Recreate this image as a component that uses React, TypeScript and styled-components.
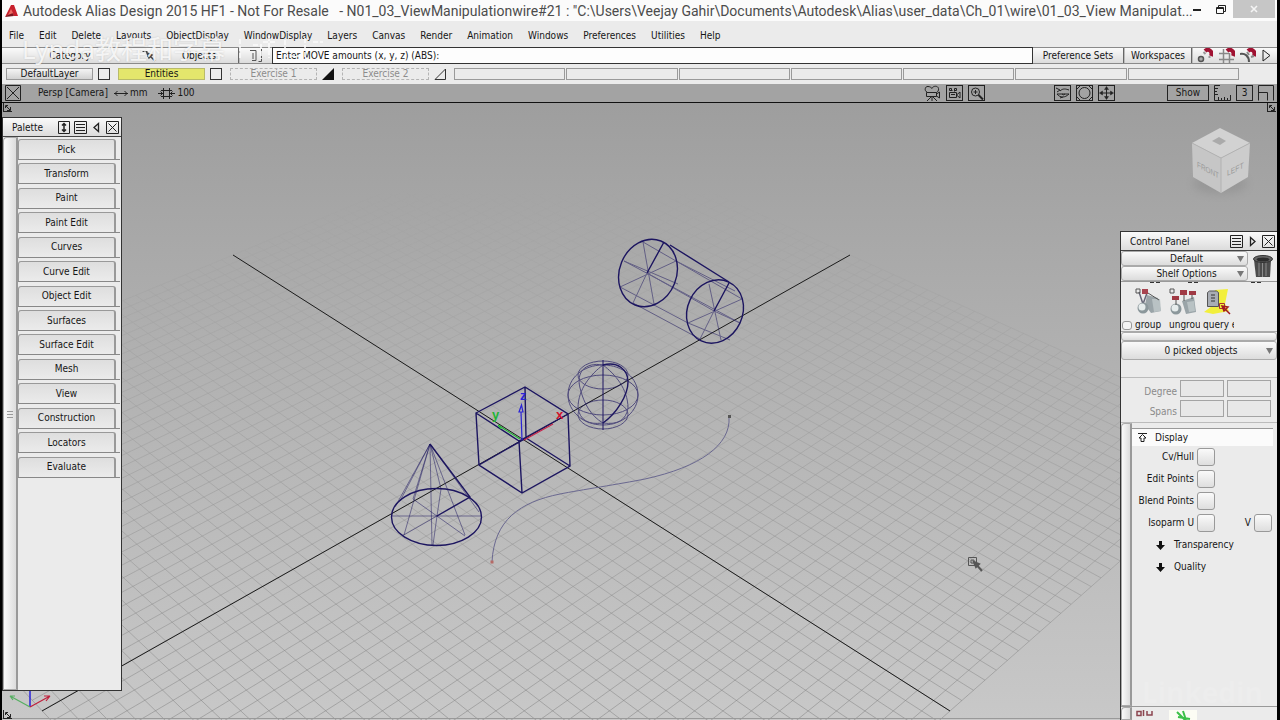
import React from 'react';
import styled, { createGlobalStyle, css } from 'styled-components';

const GlobalStyle = createGlobalStyle`
  *, *::before, *::after { box-sizing: border-box; }
  html, body, #root { height: 100%; }
  body {
    margin: 0;
    background: #000;
    color: #161616;
    font: 10px/14px "DejaVu Sans Condensed", "DejaVu Sans", "Noto Sans", sans-serif;
    overflow: hidden;
  }
  button, input, a {
    font: inherit;
    color: inherit;
    margin: 0;
    padding: 0;
    border-radius: 0;
    text-decoration: none;
  }
  ul { margin: 0; padding: 0; list-style: none; }
  svg { display: block; }
`;

const Shell = styled.div`
  height: 100vh;
  display: flex;
  flex-direction: column;
  margin: 0 3px 0 2px;
  background: #ebebeb;
  position: relative;
`;

const TitleBar = styled.header`
  display: flex;
  align-items: center;
  height: 21px;
  flex: none;
  padding-left: 2px;
  background: #fbfbfb;
`;

const Title = styled.h1`
  flex: 1;
  min-width: 0;
  margin: 0 0 0 4px;
  font: 400 14px/20px Roboto, "Open Sans", sans-serif;
  color: #4c4c4c;
  white-space: pre;
`;

const WindowButton = styled.button<{ $close?: boolean }>`
  display: grid;
  place-items: center;
  width: ${p => (p.$close ? 42 : 24)}px;
  height: ${p => (p.$close ? 18 : 20)}px;
  align-self: flex-start;
  border: 0;
  background: ${p => (p.$close ? '#c6c6c6' : 'transparent')};
`;

const WindowControls = styled.div`
  display: flex;
  align-self: flex-start;
  padding-right: 2px;
`;

const MenuBar = styled.nav`
  display: flex;
  align-items: center;
  gap: 15px;
  height: 26px;
  flex: none;
  padding: 3px 7px 0;
`;

const barGradient = css`
  background: linear-gradient(#fafafa, #dcdcdc);
`;

const CommandRow = styled.div`
  display: flex;
  height: 17px;
  flex: none;
  border-top: 1px solid #8a8a8a;
  border-bottom: 1px solid #8a8a8a;
  ${barGradient}
`;

const CommandButton = styled.button<{ $w: number; $divide?: boolean }>`
  width: ${p => p.$w}px;
  border: 0;
  border-right: ${p => (p.$divide ? '2px groove #bbb' : '0')};
  background: transparent;
  display: flex;
  align-items: center;
  justify-content: center;
`;

const Prompt = styled.input`
  flex: 1;
  min-width: 0;
  margin: -1px 0;
  padding: 0 3px;
  height: 17px;
  border: 1px solid #333;
  background: #fdfdfd;
`;

const SnapTools = styled.div`
  display: flex;
  align-items: center;
  justify-content: space-between;
  width: 84px;
  padding: 0 6px 0 4px;
`;

const ToolButton = styled.button`
  border: 0;
  background: transparent;
  display: grid;
  place-items: center;
`;

const LayerRow = styled.div`
  display: flex;
  align-items: center;
  height: 20px;
  flex: none;
  padding: 0 38px 0 4px;
`;

const LayerButton = styled.button<{ $kind: 'default' | 'active' | 'ghost' }>`
  width: 87px;
  height: 12px;
  line-height: 10px;
  border: 1px solid #999;
  flex: none;
  ${p => p.$kind === 'default' && css`background: linear-gradient(#f4f4f4, #d2d2d2);`}
  ${p => p.$kind === 'active' && css`background: #e4e66c; border-color: #b9bb6a;`}
  ${p => p.$kind === 'ghost' && css`background: transparent; border: 1px dashed #b4b4b4; color: #8c8c8c;`}
`;

const LayerBox = styled.input`
  appearance: none;
  width: 12px;
  height: 12px;
  border: 1px solid #333;
  background: #ededed;
  flex: none;
`;

const LayerGroup = styled.div`
  display: flex;
  align-items: center;
  justify-content: space-between;
  width: 104px;
  margin-right: 8px;
  flex: none;
`;

const EmptySlots = styled.div`
  flex: 1;
  display: flex;
  gap: 1px;
`;

const EmptySlot = styled.div`
  flex: 1;
  height: 12px;
  border: 1px solid #9a9a9a;
`;

const ViewBar = styled.div`
  display: flex;
  align-items: center;
  height: 19px;
  flex: none;
  padding: 0 3px;
  background: #a3a3a3;
  border-bottom: 1px solid #111;
`;

const ViewLabels = styled.div`
  display: flex;
  align-items: center;
  margin-left: 17px;
`;

const ViewLabel = styled.span<{ $before?: number }>`
  display: flex;
  align-items: center;
  gap: 2px;
  margin-left: ${p => p.$before ?? 0}px;
`;

const IconCluster = styled.div<{ $gapAfter: number }>`
  display: flex;
  align-items: center;
  gap: 5px;
  margin-right: ${p => p.$gapAfter}px;
`;

const FramedButton = styled.button<{ $w?: number; $bare?: boolean }>`
  width: ${p => p.$w ?? 17}px;
  height: 16px;
  display: grid;
  place-items: center;
  line-height: 14px;
  background: transparent;
  border: ${p => (p.$bare ? '0' : '1px solid #222')};
`;

const Spacer = styled.div`
  flex: 1;
`;

const Viewport = styled.main`
  position: relative;
  flex: 1;
  min-height: 0;
  display: flex;
  justify-content: space-between;
  align-items: flex-start;
  overflow: hidden;
  background: linear-gradient(#9e9e9e, #aeaeae 35%, #c8c8c8);
`;

const Scene = styled.svg`
  position: absolute;
  inset: 0;
  width: 100%;
  height: 100%;
`;

const CornerMark = styled.span<{ $at: 'tl' | 'tr' | 'bl' }>`
  position: absolute;
  ${p => (p.$at === 'bl' ? 'bottom: 1px;' : 'top: 0;')}
  ${p => (p.$at === 'tr' ? 'right: 1px;' : 'left: 1px;')}
`;

const Palette = styled.aside`
  position: relative;
  display: flex;
  flex-direction: column;
  width: 120px;
  height: calc(100% - 43px);
  margin-top: 14px;
  border: 1px solid #333;
  background: #ebebeb;
`;

const PanelHeader = styled.div`
  display: flex;
  align-items: center;
  gap: 4px;
  height: 19px;
  flex: none;
  padding: 0 2px 0 9px;
  border-bottom: 1px solid #444;
  ${barGradient}
`;

const PanelTitle = styled.h2`
  flex: 1;
  margin: 0;
  padding-top: 2px;
  font-size: 10px;
  line-height: 14px;
  font-weight: 400;
`;

const PanelBody = styled.div`
  flex: 1;
  min-height: 0;
  display: flex;
`;

const Gutter = styled.div<{ $w: number }>`
  width: ${p => p.$w}px;
  flex: none;
  align-self: stretch;
  display: grid;
  place-items: center;
  border: 1px solid #aaa;
  border-right: 2px solid #999;
  border-radius: 4px 0 0 0;
  background: linear-gradient(90deg, #fafafa, #dcdcdc);
`;

const PaletteTabs = styled.div`
  flex: 1;
  display: grid;
  grid-template-rows: repeat(14, 1fr);
  height: 342px;
  padding-right: 1px;
  margin-top: 2px;
`;

const TabCell = styled.div`
  height: 21px;
  padding-right: 4px;
  border-bottom: 1px solid #888;
`;

const TabButton = styled.button`
  width: 100%;
  height: 20px;
  border: 1px solid #999;
  border-bottom: 0;
  border-right: 2px solid #999;
  border-radius: 3px 3px 0 0;
  background: linear-gradient(#dedede, #ebebeb);
  line-height: 16px;
`;

const ControlPanel = styled.aside`
  position: relative;
  display: flex;
  flex-direction: column;
  width: 157px;
  height: calc(100% - 128px);
  margin-top: 128px;
  border-left: 1px solid #333;
  border-top: 1px solid #333;
  background: #ebebeb;
`;

const ShelfTop = styled.div`
  display: flex;
  flex: none;
  border-bottom: 1px solid #999;
`;

const ShelfMenus = styled.div`
  flex: 1;
`;

const DropButton = styled.button<{ $tall?: boolean }>`
  display: flex;
  align-items: center;
  justify-content: flex-end;
  width: 100%;
  height: ${p => (p.$tall ? 19 : 15)}px;
  flex: none;
  padding-right: 3px;
  border: 1px solid #aaa;
  border-radius: 3px;
  ${barGradient}
  & > span { flex: 1; text-align: center; padding-left: 14px; }
`;

const TrashButton = styled.button`
  width: 29px;
  border: 0;
  background: transparent;
  display: grid;
  place-items: center;
`;

const Shelf = styled.ul`
  position: relative;
  display: flex;
  height: 50px;
  flex: none;
  padding: 5px 0 0 14px;
  border-bottom: 1px solid #aaa;
`;

const ShelfItem = styled.li`
  width: 34px;
  height: 44px;
  overflow: hidden;
  white-space: nowrap;
`;

const ShelfButton = styled.button`
  display: block;
  width: 31px;
  border: 0;
  background: transparent;
  text-align: left;
  overflow: hidden;
  white-space: nowrap;
  & > span { display: block; line-height: 15px; }
`;

const ClippedRow = styled.svg`
  position: absolute;
  left: 0;
  top: 0;
`;

const ShelfTick = styled.input`
  appearance: none;
  position: absolute;
  left: 1px;
  bottom: 1px;
  width: 10px;
  height: 9px;
  border: 1px solid #999;
  border-radius: 3px;
  background: #f4f4f4;
`;

const Divider = styled.div`
  height: 9px;
  flex: none;
  border: 1px solid #aaa;
  border-radius: 3px;
  ${barGradient}
`;

const InfoStrip = styled.div`
  height: 18px;
  flex: none;
  border-bottom: 1px solid #bbb;
`;

const Fields = styled.div`
  display: grid;
  grid-template-columns: 55px 44px 44px;
  gap: 3px;
  flex: none;
  padding: 2px 0 5px 1px;
  border-bottom: 1px solid #bbb;
  color: #8a8a8a;
`;

const FieldLabel = styled.label`
  text-align: right;
  line-height: 24px;
  height: 17px;
`;

const Field = styled.input`
  width: 100%;
  height: 17px;
  border: 1px solid #a4a4a4;
  background: #e8e8e8;
`;

const Section = styled.section`
  flex: 1;
  margin: 5px 4px 0 0;
  border-top: 1px solid #999;
`;

const SectionHead = styled.button<{ $inner?: boolean }>`
  display: flex;
  align-items: center;
  gap: ${p => (p.$inner ? 9 : 8)}px;
  width: 100%;
  height: ${p => (p.$inner ? 22 : 17)}px;
  padding-left: ${p => (p.$inner ? 24 : 6)}px;
  border: 0;
  background: ${p => (p.$inner ? 'transparent' : '#fbfbfb')};
`;

const ToggleGrid = styled.div`
  display: grid;
  grid-template-columns: 62px 17px 1fr 17px;
  grid-auto-rows: 22px;
  align-items: center;
  column-gap: 3px;
  padding-right: 2px;
`;

const ToggleLabel = styled.label`
  text-align: right;
  white-space: nowrap;
`;

const Toggle = styled.input<{ $last?: boolean }>`
  appearance: none;
  width: 18px;
  height: 18px;
  border: 1px solid #999;
  border-radius: 3px;
  background: linear-gradient(#fafafa, #dedede);
  ${p => p.$last && css`grid-column: 4;`}
`;

const BottomShelf = styled.div`
  display: flex;
  align-items: flex-end;
  height: 14px;
  flex: none;
  border-top: 1px solid #999;
`;

const Watermark = styled.div`
  position: absolute;
  left: 20px;
  top: 33px;
  display: flex;
  align-items: center;
  gap: 14px;
  font: 400 26px/32px "Open Sans", "Noto Sans CJK SC", sans-serif;
  color: rgba(250, 250, 250, 0.9);
  text-shadow: 0 0 2px rgba(0, 0, 0, 0.16);
  white-space: nowrap;
  pointer-events: none;
`;

const Brand = styled.div`
  position: absolute;
  right: 14px;
  bottom: 12px;
  font: 700 28px/32px "Open Sans", sans-serif;
  color: rgba(255, 255, 255, 0.12);
  pointer-events: none;
`;

const MENUS = ['File', 'Edit', 'Delete', 'Layouts', 'ObjectDisplay', 'WindowDisplay', 'Layers', 'Canvas',
  'Render', 'Animation', 'Windows', 'Preferences', 'Utilities', 'Help'];

const TABS = ['Pick', 'Transform', 'Paint', 'Paint Edit', 'Curves', 'Curve Edit', 'Object Edit', 'Surfaces',
  'Surface Edit', 'Mesh', 'View', 'Construction', 'Locators', 'Evaluate'];

/* Perspective projection of the ground plane, u and v in -1..1 */
const project = (u: number, v: number) => {
  const w = 1 + 0.1906 * u + 0.1911 * v;
  const x = (489 * u - 245.5 * v + 523) / w;
  const y = (-135.8 * u - 135.7 * v + 439.4) / w;
  return `${x.toFixed(1)} ${y.toFixed(1)}`;
};

const DIVISIONS = 32;
const gridPath = Array.from({ length: DIVISIONS * 2 + 1 }, (_, i) => i / DIVISIONS - 1)
  .map(t => `M${project(t, -1)}L${project(t, 1)}M${project(-1, t)}L${project(1, t)}`)
  .join('');

const CloseX = () => (
  <svg width="13" height="13" viewBox="0 0 13 13" fill="none" stroke="#222">
    <path d="M.5.5h12v12h-12zM2.500 2.500l8 8M10.500 2.500l-8 8" />
  </svg>
);

const ListIcon = () => (
  <svg width="13" height="13" viewBox="0 0 13 13" fill="none" stroke="#222">
    <path d="M.5.5h12v12h-12zM2 3.500h9M2 6.500h9M2 9.500h9" />
  </svg>
);

const TriangleDown = () => (
  <svg width="7" height="7" viewBox="0 0 7 7"><path d="M0 1h7L3.500 7z" fill="#777" /></svg>
);

const CornerArrows = () => (
  <svg width="9" height="9" viewBox="0 0 9 9" fill="none" stroke="#222">
    <path d="M.5 0v8.500M0 8.500h9M2.500 5V2.500H5M3 3l4 4M7.500 4v3.500H4" />
  </svg>
);

const Wireframes = () => (
  <g fill="none" stroke="#1c1560" strokeWidth="1">
    <g strokeWidth="1.400">
      <ellipse cx="648" cy="273" rx="28.500" ry="34.500" transform="rotate(22 648 273)" />
      <ellipse cx="715" cy="311.500" rx="27.500" ry="32.500" transform="rotate(25 715 311.500)" />
      <path d="M664 242L647 273M729 283L714 311M670 245L729 282" />
    </g>
    <g opacity="0.500">
      <path d="M643 242L654 304M624 261l54 23M620 287l56-26M633 303l14-30" />
      <path d="M709 284L721 340M688 323L742 299M740 323L714 311M700 339L714 311" />
      <path d="M647 273L714 311M624 261L740 323M643 242L742 299M676 261L735 291M620 287L688 323L730 340M633 303L700 339" />
    </g>
    <g opacity="0.650">
      <ellipse cx="603" cy="395" rx="35" ry="20" />
      <path d="M568 395C568 378 583 365 603 365s35 13 35 30c0 16-15 30-35 30s-35-14-35-30z" />
      <ellipse cx="603" cy="375" rx="25" ry="14" />
      <ellipse cx="603" cy="414.500" rx="25" ry="14.500" />
      <path d="M603 365c-18-3-27 7-23 23s11 28 23 35M603 365c-12 9-25 24-25 43 2 12 10 17 25 15M603 365c12 9 25 24 25 43-2 12-10 17-25 15" />
    </g>
    <path d="M603 360v70" />
    <path d="M603 365c15-4 25 5 25 17 0 13-11 31-25 41" strokeWidth="1.400" />
    <path
      d="M476 413L525 387L568 414L570 466L522 493L479 465ZM476 413L519 441L568 414M519 441L522 493M525 387L526 438L479 465M526 438L570 466"
      strokeWidth="1.400"
    />
    <ellipse cx="436.500" cy="517" rx="45" ry="28.500" strokeWidth="1.400" />
    <path d="M430 444L470 497L437 516" strokeWidth="1.400" />
    <path
      d="M430 444L400 501M430 444L395 507M430 444L404 535M430 444L413 499M430 444L432 545M430 444L441 489M430 444L465 535M430 444L479 512M392 516h90M402 536L437 516L433 545M413 499L465 536M437 516L441 489"
      opacity="0.500"
    />
    <path d="M492 562C494 520 520 502 560 494C580 490 620 484 645 479C700 467 731 445 729 417" stroke="#6a6890" />
  </g>
);

const ViewCube = () => (
  <g>
    <ellipse cx="1220" cy="184" rx="27" ry="10" fill="#888" opacity="0.450" filter="url(#soft)" />
    <path d="M1192 143l28-15 30 15-29 15z" fill="#d2d2d2" />
    <path d="M1192 143l29 15v35l-28-16z" fill="#c6c6c6" />
    <path d="M1250 143l-29 15v35l27-16z" fill="#cccccc" />
    <path d="M1192 143l29 15 29-15M1221 158v35" fill="none" stroke="#b2b2b2" />
    <path d="M1212 141l7-4 7 4-6 4z" fill="#aaa" />
    <g fill="#999" fontSize="8" fontFamily="Liberation Sans, sans-serif">
      <text transform="matrix(.8 .42 0 1 1197 167)">FRONT</text>
      <text transform="matrix(.85 -.42 0 1 1227 176)">LEFT</text>
    </g>
  </g>
);

const SceneDrawing = () => (
  <Scene viewBox="2 103 1275 617" preserveAspectRatio="xMinYMin slice" role="img" aria-label="Perspective view">
    <defs>
      <linearGradient id="fade" gradientUnits="userSpaceOnUse" x1="0" y1="190" x2="0" y2="720">
        <stop offset="0" stopColor="#fff" stopOpacity="0" />
        <stop offset="0.300" stopColor="#fff" stopOpacity="0.300" />
        <stop offset="1" stopColor="#fff" stopOpacity="1" />
      </linearGradient>
      <mask id="depth" maskUnits="userSpaceOnUse" x="0" y="100" width="1280" height="620">
        <rect x="0" y="100" width="1280" height="620" fill="url(#fade)" />
      </mask>
      <filter id="soft" x="-50%" y="-50%" width="200%" height="200%"><feGaussianBlur stdDeviation="4" /></filter>
    </defs>
    <g mask="url(#depth)">
      <path d={gridPath} fill="none" stroke="#7c7c7c" strokeWidth="1" opacity="0.480" />
    </g>
    <path d="M233 255L950 711M850 255L42 711" stroke="#1c1c1c" strokeWidth="1" />
    <Wireframes />
    <g fill="none" strokeWidth="1.200">
      <path d="M522 440l-1-28m-2 0h4l-1.500-7z" stroke="#2a22d8" />
      <path d="M520 439L498 425m0 0l3 4" stroke="#1fb535" />
      <path d="M524 440L553 424" stroke="#c8204a" />
    </g>
    <g fontFamily="Liberation Sans, sans-serif" fontSize="13" fontWeight="700">
      <text x="520" y="400" fill="#2a22d8">z</text>
      <text x="492" y="419" fill="#1fb535">y</text>
      <text x="556" y="419" fill="#d0122c">x</text>
    </g>
    <path d="M490.500 560.500h3v3h-3z" fill="#b56a66" />
    <path d="M728 415h3v3h-3z" fill="#555" />
    <g fill="none" stroke="#555">
      <path d="M968.500 557.500h8v8h-8zM971 560h3v3h-3z" />
      <path d="M974 562l8 9M974 562l5 2-3 3z" strokeWidth="2" />
    </g>
    <ViewCube />
    <g fill="none" strokeWidth="1.200">
      <path d="M30 707v-20" stroke="#2a22d8" strokeWidth="1.500" />
      <path d="M30 707L10 696l5 0m-5 0l3 4" stroke="#56b062" />
      <path d="M30 707L50 696l-6 0m6 0l-4 5" stroke="#c0203c" />
    </g>
    <path d="M0 718.500h1280" stroke="#999" />
  </Scene>
);

const WindowTitle =
  'Autodesk Alias Design 2015 HF1 - Not For Resale   - N01_03_ViewManipulationwire#21 : "C:\\Users\\Veejay Gahir\\Documents\\Autodesk\\Alias\\user_data\\Ch_01\\wire\\01_03_View Manipulat...';

export default function App() {
  return (
    <>
      <GlobalStyle />
      <Shell>
        <TitleBar>
          <svg width="15" height="14" viewBox="0 0 15 14">
            <path d="M1 13L7 1l3 0 4 11-4 0-2-3z" fill="#c8202c" />
            <path d="M1 13l7-5 2 4z" fill="#7c1620" />
            <path d="M7 5l2 4-5 2z" fill="#ec6a62" />
          </svg>
          <Title>{WindowTitle}</Title>
          <WindowControls>
            <WindowButton aria-label="Minimize">
              <svg width="8" height="3"><path d="M0 0h8v2H0z" fill="#222" /></svg>
            </WindowButton>
            <WindowButton aria-label="Restore">
              <svg width="11" height="10" viewBox="0 0 11 10" fill="none" stroke="#222">
                <path d="M.5 2.500h7v6h-7zM2.500 2.500v-2h7v6h-2M.5 3.500h7" />
              </svg>
            </WindowButton>
            <WindowButton $close aria-label="Close">
              <svg width="8" height="8" viewBox="0 0 8 8" stroke="#f4f4f4" strokeWidth="1.600">
                <path d="M1 1l6 6M7 1L1 7" />
              </svg>
            </WindowButton>
          </WindowControls>
        </TitleBar>

        <MenuBar aria-label="Main menu">
          {MENUS.map(m => <a key={m} href="#">{m}</a>)}
        </MenuBar>

        <CommandRow>
          <CommandButton $w={136}>Category</CommandButton>
          <CommandButton $w={22} aria-label="Pick tool">
            <svg width="16" height="12" viewBox="0 0 16 12" fill="none" stroke="#444">
              <path d="M1.500 1.500h5v5" strokeDasharray="2 1" /><path d="M6 3l8 8M6 3l5 2-3 3z" strokeWidth="1.500" />
            </svg>
          </CommandButton>
          <CommandButton $w={80} $divide>Objects</CommandButton>
          <CommandButton $w={32} aria-label="Prompt history">
            <svg width="14" height="13" viewBox="0 0 14 13" fill="none" stroke="#555">
              <path d="M1 1.500h6v10H3M4 4v6M12.500 0v12.500h-3" />
            </svg>
          </CommandButton>
          <Prompt aria-label="Prompt line" defaultValue="Enter MOVE amounts (x, y, z) (ABS):" />
          <CommandButton $w={92} $divide>Preference Sets</CommandButton>
          <CommandButton $w={68} $divide>Workspaces</CommandButton>
          <SnapTools>
            <ToolButton aria-label="Point snap">
              <svg width="16" height="15" viewBox="0 0 16 15" fill="none">
                <circle cx="4" cy="11" r="2.500" stroke="#555" strokeWidth="1.500" fill="#aaa" />
                <path d="M8 3c3-3 8 0 6 5" stroke="#a01232" strokeWidth="4" />
                <path d="M6.500 4l2 2M11.500 9l2 0" stroke="#999" strokeWidth="2" />
              </svg>
            </ToolButton>
            <ToolButton aria-label="Grid snap">
              <svg width="16" height="15" viewBox="0 0 16 15" fill="none">
                <path d="M4.500 1v14M10.500 5v10M0 5.500h10M0 11.500h15" stroke="#888" strokeWidth="1.500" />
                <path d="M8 3c3-3 8 0 6 5" stroke="#a01232" strokeWidth="4" />
              </svg>
            </ToolButton>
            <ToolButton aria-label="Curve snap">
              <svg width="16" height="15" viewBox="0 0 16 15" fill="none">
                <path d="M0 6c5-1 9 2 9 8" stroke="#555" strokeWidth="2" />
                <path d="M8 3c3-3 8 0 6 5" stroke="#a01232" strokeWidth="4" />
                <path d="M7 4l2 3M11 9l3-1" stroke="#888" strokeWidth="2" />
              </svg>
            </ToolButton>
            <ToolButton aria-label="More">
              <svg width="9" height="13" viewBox="0 0 9 13" fill="none" stroke="#222">
                <path d="M1 1v11l7-5.500z" />
              </svg>
            </ToolButton>
          </SnapTools>
        </CommandRow>

        <LayerRow>
          <LayerGroup>
            <LayerButton $kind="default">DefaultLayer</LayerButton>
            <LayerBox type="checkbox" aria-label="Pick DefaultLayer" />
          </LayerGroup>
          <LayerGroup>
            <LayerButton $kind="active">Entities</LayerButton>
            <LayerBox type="checkbox" aria-label="Pick Entities" />
          </LayerGroup>
          <LayerGroup>
            <LayerButton $kind="ghost">Exercise 1</LayerButton>
            <svg width="12" height="12" viewBox="0 0 12 12">
              <path d="M0 12L12 0v12z" fill="#111" />
            </svg>
          </LayerGroup>
          <LayerGroup>
            <LayerButton $kind="ghost">Exercise 2</LayerButton>
            <svg width="12" height="12" viewBox="0 0 12 12">
              <path d="M1 11.500L11.500 1v10.500z" fill="none" stroke="#333" />
            </svg>
          </LayerGroup>
          <EmptySlots>
            {Array.from({ length: 7 }, (_, i) => <EmptySlot key={i} />)}
          </EmptySlots>
        </LayerRow>

        <ViewBar>
          <svg width="16" height="16" viewBox="0 0 16 16" fill="none" stroke="#222">
            <path d="M.5.5h15v15h-15zM2 2l12 12M14 2L2 14" />
          </svg>
          <ViewLabels>
            <ViewLabel>Persp [Camera]</ViewLabel>
            <ViewLabel $before={6}>
              <svg width="14" height="7" viewBox="0 0 14 7" fill="none" stroke="#222">
                <path d="M0 3.500h14M3.500 1L1 3.500 3.500 6M10.500 1L13 3.500 10.500 6" />
              </svg>
              mm
            </ViewLabel>
            <ViewLabel $before={11}>
              <svg width="17" height="11" viewBox="0 0 17 11" fill="none" stroke="#222">
                <path d="M5.500 0v11M11.500 0v11M3 2.500h11M3 8.500h11M0 5.500h5M17 5.500h-5M2.500 3.500l2 2-2 2M14.500 3.500l-2 2 2 2" />
              </svg>
              100
            </ViewLabel>
          </ViewLabels>
          <Spacer />
          <IconCluster $gapAfter={69}>
            <FramedButton $bare aria-label="Camera">
              <svg width="17" height="16" viewBox="0 0 17 16" fill="none" stroke="#222">
                <path d="M3 7C0 6 1 1 4 1.500c2 0 3 1 4 2 1-3 6-3 6.500 0 .5 2-1 3.500-2 4M2.500 7.500h10v4h-10zM12.500 9l3-2v6l-3-2M7 12l-4 4M8 12v4M9 12l4 4" />
              </svg>
            </FramedButton>
            <FramedButton aria-label="Camera options">
              <svg width="13" height="12" viewBox="0 0 13 12" fill="none" stroke="#222">
                <path d="M1.500 5.500h7v5h-7zM8.500 8l3.500-3v6L8.500 8M2.500 3.500h1v-2h-2v2h3M6.500 3.500h2v-2h-2v3M3 7.500h4" />
              </svg>
            </FramedButton>
            <FramedButton aria-label="Zoom">
              <svg width="14" height="13" viewBox="0 0 14 13" fill="none" stroke="#222">
                <circle cx="5.500" cy="5" r="4" /><path d="M3.500 5h4M5.500 3v4" /><path d="M8.500 8l4.500 4.500" strokeWidth="2" />
              </svg>
            </FramedButton>
          </IconCluster>
          <IconCluster $gapAfter={52}>
            <FramedButton aria-label="Look at">
              <svg width="14" height="13" viewBox="0 0 14 13" fill="none" stroke="#222">
                <path d="M0 1l4 2-3 2M4 4c3-3 6-2 9-1M1 7h12M1 7c3 4 8 4 12 0M6 7a2 2 0 0 0 3 0M4 11l3-1" />
              </svg>
            </FramedButton>
            <FramedButton aria-label="Fit view">
              <svg width="15" height="14" viewBox="0 0 15 14" fill="none" stroke="#222">
                <circle cx="7.500" cy="7" r="5.500" /><path d="M0 3l3-3M12 0l3 3M0 11l3 3M12 14l3-3" />
              </svg>
            </FramedButton>
            <FramedButton aria-label="Pan">
              <svg width="15" height="14" viewBox="0 0 15 14" fill="#222" stroke="#222">
                <path d="M7.500 2v10M2 7h11" fill="none" /><path d="M7.500.5l2 3h-4zM7.500 13.500l2-3h-4zM.5 7l3-2v4zM14.500 7l-3-2v4z" strokeWidth=".5" />
              </svg>
            </FramedButton>
          </IconCluster>
          <IconCluster $gapAfter={0}>
            <FramedButton $w={42}>Show</FramedButton>
            <FramedButton $bare aria-label="Rulers">
              <svg width="17" height="16" viewBox="0 0 17 16" fill="none" stroke="#222">
                <path d="M6 .5H.5v15h16V10M1 3.500h3M1 6.500h2M1 9.500h3M4.500 12v3M7.500 13v2M10.500 12v3M13.500 13v2" />
              </svg>
            </FramedButton>
            <FramedButton>3</FramedButton>
            <FramedButton $bare $w={16} aria-label="Maximize view">
              <svg width="16" height="16" viewBox="0 0 16 16" fill="none" stroke="#222">
                <path d="M.5 15.500V.5h15v15M.5 7.500h9v8" />
              </svg>
            </FramedButton>
          </IconCluster>
        </ViewBar>

        <Viewport>
          <SceneDrawing />
          <CornerMark $at="tl"><CornerArrows /></CornerMark>
          <CornerMark $at="tr"><CornerArrows /></CornerMark>
          <CornerMark $at="bl"><CornerArrows /></CornerMark>

          <Palette>
            <PanelHeader>
              <PanelTitle>Palette</PanelTitle>
              <ToolButton aria-label="Resize palette">
                <svg width="12" height="13" viewBox="0 0 12 13" fill="none" stroke="#222">
                  <path d="M.5.5h11v12H.5z" /><path d="M6 3v7M4 4.500l2-2 2 2M4 8.500l2 2 2-2" strokeWidth="1.500" />
                </svg>
              </ToolButton>
              <ToolButton aria-label="Palette menu"><ListIcon /></ToolButton>
              <ToolButton aria-label="Collapse palette">
                <svg width="11" height="11" viewBox="0 0 11 11" fill="none" stroke="#222">
                  <path d="M7.500 1.500v8L3 5.500z" strokeWidth="1.300" />
                </svg>
              </ToolButton>
              <ToolButton aria-label="Close palette"><CloseX /></ToolButton>
            </PanelHeader>
            <PanelBody>
              <Gutter $w={15}>
                <svg width="6" height="8" stroke="#999"><path d="M0 1.500h6M0 4.500h6M0 7.500h6" /></svg>
              </Gutter>
              <PaletteTabs>
                {TABS.map(t => <TabCell key={t}><TabButton>{t}</TabButton></TabCell>)}
              </PaletteTabs>
            </PanelBody>
          </Palette>

          <ControlPanel>
            <PanelHeader>
              <PanelTitle>Control Panel</PanelTitle>
              <ToolButton aria-label="Panel menu"><ListIcon /></ToolButton>
              <ToolButton aria-label="Expand panel">
                <svg width="11" height="11" viewBox="0 0 11 11" fill="none" stroke="#222">
                  <path d="M3.500 1.500v8L8 5.500z" strokeWidth="1.300" />
                </svg>
              </ToolButton>
              <ToolButton aria-label="Close panel"><CloseX /></ToolButton>
            </PanelHeader>
            <ShelfTop>
              <ShelfMenus>
                <DropButton><span>Default</span><TriangleDown /></DropButton>
                <DropButton><span>Shelf Options</span><TriangleDown /></DropButton>
              </ShelfMenus>
              <TrashButton aria-label="Trash">
                <svg width="22" height="24" viewBox="0 0 22 24">
                  <path d="M2 6h17l-1 17H4z" fill="#4c4c4c" />
                  <path d="M7 8v14M10.500 8v15M14 8v14" stroke="#8c8c8c" fill="none" />
                  <ellipse cx="11" cy="5" rx="9.500" ry="3.500" fill="#666" stroke="#333" />
                  <ellipse cx="11" cy="5.500" rx="6.500" ry="2" fill="#2c2c2c" />
                </svg>
              </TrashButton>
            </ShelfTop>
            <Shelf>
              <ClippedRow width="150" height="3" viewBox="0 0 150 3" fill="none" stroke="#333" aria-hidden="true">
                <path d="M29 .5h4M35 .5h4M67 .5h4M73 .5h4M130 .5h4M136 .5h4" />
              </ClippedRow>
              <ShelfTick type="checkbox" aria-label="Shelf handle" />
              <ShelfItem>
                <ShelfButton>
                  <svg width="28" height="30" viewBox="0 0 28 30" fill="none">
                    <path d="M12 8l11 3 3 13-10 2-6-8z" fill="#9aa4a8" />
                    <path d="M17 12l8 0 1 12-7 1z" fill="#b9c2c4" />
                    <path d="M4 5l4 12 4-11" stroke="#667" strokeWidth="1.500" />
                    <circle cx="8" cy="21" r="5.500" fill="#8b979b" /><circle cx="7" cy="20" r="3.500" fill="#e6ecec" />
                    <path d="M1 2h4v4H1z" stroke="#555" /><path d="M7 2h6v5H7z" fill="#a84450" />
                    <path d="M13 6l11 7" stroke="#555" />
                  </svg>
                  <span>group</span>
                </ShelfButton>
              </ShelfItem>
              <ShelfItem>
                <ShelfButton>
                  <svg width="28" height="30" viewBox="0 0 28 30" fill="none">
                    <path d="M13 14l12-4 2 15-10 2z" fill="#9aa4a8" />
                    <path d="M18 15l7-1 1 10-6 1z" fill="#b9c2c4" />
                    <circle cx="7" cy="22" r="5.500" fill="#8b979b" /><circle cx="6" cy="21" r="3.500" fill="#e6ecec" />
                    <path d="M1 2h4v4H1zM7 13v5M15 8v6M23 8v4" stroke="#555" />
                    <path d="M3 9h7v4H3zM11 3h7v5h-7zM20 4h7v4h-7z" fill="#a03a44" />
                  </svg>
                  <span>ungroup</span>
                </ShelfButton>
              </ShelfItem>
              <ShelfItem>
                <ShelfButton>
                  <svg width="28" height="30" viewBox="0 0 28 30" fill="none">
                    <path d="M12 3l13-1-3 15 4 7-16 3-9-2 8-6z" fill="#f2ef3c" />
                    <path d="M4.500 5.500l2-1.500h7l2 1.500v14h-11z" fill="#a9adb4" stroke="#555" />
                    <path d="M8 8h4M8 11h4M8 14h4" stroke="#333" />
                    <path d="M16.500 16.500h5v5h-5z" stroke="#a83030" />
                    <path d="M19 19l8 8M19 19l6 1-4 4z" stroke="#a01820" strokeWidth="1.500" />
                  </svg>
                  <span>query edit</span>
                </ShelfButton>
              </ShelfItem>
            </Shelf>
            <Divider />
            <DropButton $tall><span>0 picked objects</span><TriangleDown /></DropButton>
            <InfoStrip />
            <Fields>
              <FieldLabel htmlFor="degU">Degree</FieldLabel>
              <Field id="degU" disabled /><Field aria-label="Degree V" disabled />
              <FieldLabel htmlFor="spanU">Spans</FieldLabel>
              <Field id="spanU" disabled /><Field aria-label="Spans V" disabled />
            </Fields>
            <PanelBody>
              <Gutter $w={11} />
              <Section>
                <SectionHead>
                  <svg width="9" height="9" viewBox="0 0 9 9" fill="none" stroke="#222">
                    <path d="M0 .5h9M4.500 1.500L1 5h2v3.500h3V5h2z" />
                  </svg>
                  Display
                </SectionHead>
                <ToggleGrid>
                  <ToggleLabel htmlFor="hull">Cv/Hull</ToggleLabel><Toggle id="hull" type="checkbox" /><span /><span />
                  <ToggleLabel htmlFor="edit">Edit Points</ToggleLabel><Toggle id="edit" type="checkbox" /><span /><span />
                  <ToggleLabel htmlFor="blend">Blend Points</ToggleLabel><Toggle id="blend" type="checkbox" /><span /><span />
                  <ToggleLabel htmlFor="isoU">Isoparm U</ToggleLabel><Toggle id="isoU" type="checkbox" />
                  <ToggleLabel htmlFor="isoV">V</ToggleLabel><Toggle id="isoV" type="checkbox" $last />
                </ToggleGrid>
                {['Transparency', 'Quality'].map(s => (
                  <SectionHead key={s} $inner>
                    <svg width="9" height="9" viewBox="0 0 9 9"><path d="M3 0h3v4h3L4.500 9 0 4h3z" fill="#111" /></svg>
                    {s}
                  </SectionHead>
                ))}
              </Section>
            </PanelBody>
            <BottomShelf>
              <Gutter $w={11} />
              <svg width="80" height="12" viewBox="0 0 80 12" fill="none">
                <path d="M5 3.500h4v4H5zM11.500 2v6M15 3v4h5V3" stroke="#8c4650" strokeWidth="1.500" />
                <path d="M37 2h28v10H37z" fill="#fcfcf4" />
                <path d="M45 4l8 8M51 3l3 9M46 9l12 2" stroke="#3cc048" strokeWidth="2" />
              </svg>
            </BottomShelf>
          </ControlPanel>
        </Viewport>

        <Watermark>
          Lynda教程和字幕
          <svg width="90" height="26" viewBox="0 0 90 26" fill="none" stroke="#fafafa" strokeOpacity="0.800" strokeWidth="2">
            <path d="M1 3v20M14 9h8v14M30 0v22M24 6h14M46 4v16h14M66 2v20M74 6h10M72 14h14" strokeDasharray="5 2" />
          </svg>
        </Watermark>
        <Brand>Linkedin</Brand>
      </Shell>
    </>
  );
}
